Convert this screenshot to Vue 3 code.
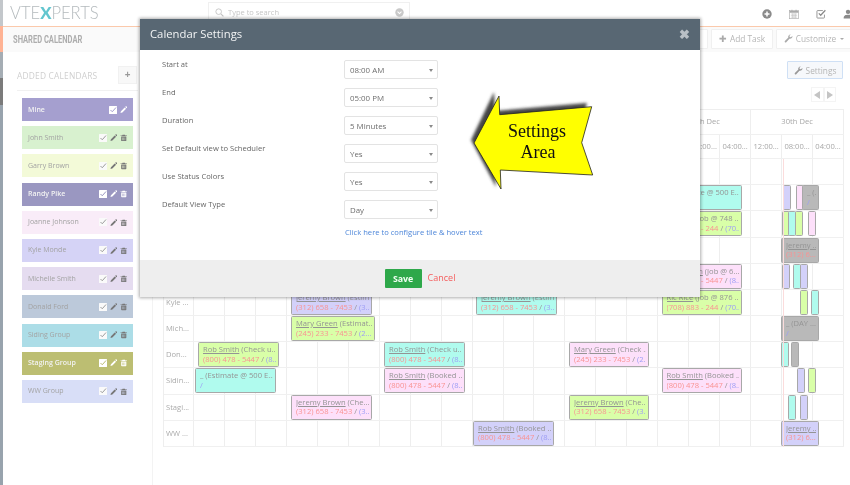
<script setup>
const calendars = [
  { name: 'Mine', bg: '#a59fcf', light: true, noTrash: true },
  { name: 'John Smith', bg: '#d8f1cf' },
  { name: 'Garry Brown', bg: '#f3fad8' },
  { name: 'Randy Pike', bg: '#9a97c1', light: true },
  { name: 'Joanne Johnson', bg: '#f9ecf8' },
  { name: 'Kyle Monde', bg: '#d5d3f6' },
  { name: 'Michelle Smith', bg: '#e5dcf0' },
  { name: 'Donald Ford', bg: '#bcc9da' },
  { name: 'Siding Group', bg: '#acdde7' },
  { name: 'Staging Group', bg: '#bcbe72', light: true },
  { name: 'WW Group', bg: '#d8def7' }
]
const days = ['24th Dec', '25th Dec', '26th Dec', '27th Dec', '28th Dec', '29th Dec', '30th Dec']
const times = ['12:00...', '08:00...', '04:00...']
const hours = days.flatMap(() => times)
const cells = Array.from({ length: 21 }, (_, i) => i)

const C = { cyan: '#b0fbee', green: '#d9ffa8', pink: '#fde0fa', lav: '#d3d1fa', gray: '#b9b9b9' }
const ev = (x1, x2, color, name, rest, phone, other) => ({ x1, x2, color, name, rest, phone, other })
const rows = [
  { name: 'Mine', events: [] },
  { name: 'John ...', events: [
    ev(661.5, 742, C.cyan, '', '_ (Estimate @ 500 E...', '', '/'),
    ev(783, 790, C.lav, 'R', '', '(', ''), ev(796, 802, C.pink, 'R', '', '(', ''), ev(802, 819, C.gray, '', '_ (...', '', '/')
  ] },
  { name: 'Garry ...', events: [
    ev(661.5, 742, C.green, 'Ric Rice', '(Job @ 748 ...', '(708) 883 - 244', '(70...'),
    ev(782, 787, C.green, '', '', '', ''), ev(788, 793, C.cyan, '', '', '', ''), ev(795, 800, C.green, '', '', '', ''), ev(808, 815, C.pink, 'R', '', '(', '')
  ] },
  { name: 'Randy ...', events: [ev(781, 819, C.gray, 'Jeremy ...', '', '(312) 6...', '')] },
  { name: 'Joann...', events: [
    ev(661.5, 742, C.pink, 'Rob Smith', '(Job @ 6...', '(800) 478 - 5447', '(8...'),
    ev(782, 790, C.lav, 'R', '', '(', ''), ev(793, 800, C.cyan, 'R', '', '(', ''), ev(800, 806, C.lav, 'R', '', '(', '')
  ] },
  { name: 'Kyle ...', events: [
    ev(291, 372, C.lav, 'Jeremy Brown', '(Estim...', '(312) 658 - 7453', '(3...'),
    ev(476, 557, C.cyan, 'Jeremy Brown', '(Estim...', '(312) 658 - 7453', '(3...'),
    ev(661.5, 742, C.green, 'Ric Rice', '(Job @ 876 ...', '(708) 883 - 244', '(70...'),
    ev(800, 805, C.green, '', '', '', ''), ev(811, 819, C.cyan, 'R', '', '(', '')
  ] },
  { name: 'Mich...', events: [
    ev(291, 375, C.green, 'Mary Green', '(Estimat...', '(245) 233 - 7453', '(2...'),
    ev(781, 819, C.gray, '', '_ (DAY ...', '', '/')
  ] },
  { name: 'Don...', events: [
    ev(198, 279, C.green, 'Rob Smith', '(Check u...', '(800) 478 - 5447', '(8...'),
    ev(384, 465, C.cyan, 'Rob Smith', '(Check u...', '(800) 478 - 5447', '(8...'),
    ev(569, 649, C.pink, 'Mary Green', '(Check ...', '(245) 233 - 7453', '(2...'),
    ev(781, 788, C.cyan, 'R', '', '(', ''), ev(791, 799, C.gray, 'M', '', '(', '')
  ] },
  { name: 'Sidin...', events: [
    ev(195, 276, C.cyan, '', '_ (Estimate @ 500 E...', '', '/'),
    ev(384, 465, C.pink, 'Rob Smith', '(Booked ...', '(800) 478 - 5447', '(8...'),
    ev(661.5, 742, C.pink, 'Rob Smith', '(Booked ...', '(800) 478 - 5447', '(8...'),
    ev(797, 804, C.lav, 'B', '', '(', ''), ev(808, 816, C.green, 'B', '', '(', '')
  ] },
  { name: 'Stagi...', events: [
    ev(291, 372, C.pink, 'Jeremy Brown', '(Che...', '(312) 658 - 7453', '(3...'),
    ev(569, 649, C.green, 'Jeremy Brown', '(Che...', '(312) 658 - 7453', '(3...'),
    ev(788, 796, C.cyan, 'J', '', '(', ''), ev(800, 808, C.lav, 'B', '', '(', '')
  ] },
  { name: 'WW ...', events: [
    ev(473, 554, C.lav, 'Rob Smith', '(Booked ...', '(800) 478 - 5447', '(8...'),
    ev(781, 819, C.lav, 'Jeremy ...', '', '(312) 6...', '')
  ] }
]
const evStyle = (e) => ({ left: e.x1 - 164 + 'px', width: e.x2 - e.x1 + 'px', background: e.color })

const settings = [
  { label: 'Start at', value: '08:00 AM' },
  { label: 'End', value: '05:00 PM' },
  { label: 'Duration', value: '5 Minutes' },
  { label: 'Set Default view to Scheduler', value: 'Yes' },
  { label: 'Use Status Colors', value: 'Yes' },
  { label: 'Default View Type', value: 'Day' }
]
const pencil = 'M1 15l1-4 8-8 3 3-8 8zM11 2l1.300-1.300a1 1 0 0 1 1.400 0l1.600 1.600a1 1 0 0 1 0 1.400L14 5z'
const trash = 'M5.500 1.500h5l1 1.500H15v1.500H1V3h3.500zM2.500 5.500h11V14a1.500 1.500 0 0 1-1.500 1.500H4A1.500 1.500 0 0 1 2.500 14zM5 7.500V13.500h1V7.500zM7.500 7.500V13.500h1V7.500zM10 7.500V13.500h1V7.500z'
const wrench = 'M15 4.500a4 4 0 0 1-5.300 3.800L4 14.500a1.600 1.600 0 0 1-2.400-2.200L7.700 6.400A4 4 0 0 1 12 1L9.700 3.300l.5 2.100 2.200.5L14.700 3.600q.3.400.3.900z'
</script>

<template>
  <div class="app">
    <div class="rail">
      <i class="rail-top"></i><i class="rail-accent"></i><i class="rail-mid"></i><i class="rail-thumb"></i><i class="rail-rest"></i>
    </div>
    <div class="page">
      <header class="topbar">
        <div class="logo">VTE<span class="logo-x">X</span>PERTS</div>
        <div class="search">
          <svg class="search-icon" viewBox="0 0 16 16"><circle cx="6.500" cy="6.500" r="5" fill="none" stroke="#c4c4c4" stroke-width="1.600"/><path d="M10.500 10.500L15 15" stroke="#c4c4c4" stroke-width="2"/></svg>
          <span class="search-text">Type to search</span>
          <svg class="search-more" viewBox="0 0 16 16"><circle cx="8" cy="8" r="7.500" fill="#c9c9c9"/><path d="M4.500 6.500L8 10l3.500-3.500" fill="none" stroke="#fff" stroke-width="1.800"/></svg>
        </div>
        <div class="top-icons">
          <svg viewBox="0 0 16 16"><circle cx="8" cy="8" r="7.500" fill="#8a8a8a"/><path d="M4 8h8M8 4v8" stroke="#fff" stroke-width="2.400"/></svg>
          <svg viewBox="0 0 16 16"><rect x="1" y="2.500" width="14" height="13" fill="none" stroke="#aaa" stroke-width="1"/><path d="M1 3h14v3H1zM4 1h1.500v3H4zM10.500 1H12v3h-1.500z" fill="#aaa"/><path d="M3 8h10M3 10.500h10M3 13h10M5.500 7v8M8 7v8M10.500 7v8" stroke="#bbb" stroke-width=".8"/></svg>
          <svg viewBox="0 0 16 16"><path d="M13.500 9v4.500a1 1 0 0 1-1 1h-10a1 1 0 0 1-1-1v-10a1 1 0 0 1 1-1H11" fill="none" stroke="#8a8a8a" stroke-width="1.400"/><path d="M4.500 7l3 3L15 2" fill="none" stroke="#8a8a8a" stroke-width="2"/></svg>
          <svg viewBox="0 0 16 16"><circle cx="8" cy="4.500" r="3.500" fill="#8a8a8a"/><path d="M1 15c0-5 3-6 7-6s7 1 7 6z" fill="#8a8a8a"/></svg>
        </div>
      </header>

      <div class="subbar">
        <h1 class="page-title">SHARED CALENDAR</h1>
        <div class="sub-actions">
          <button class="btn btn-add">Add Event</button>
          <button class="btn btn-add"><span class="plus">✚</span> Add Task</button>
          <button class="btn btn-custom">
            <svg viewBox="0 0 16 16"><path :d="wrench" fill="#aaa"/></svg>
            Customize <i class="caret"></i>
          </button>
        </div>
      </div>

      <div class="content">
        <aside class="sidebar">
          <div class="side-head">
            <span class="side-title">ADDED CALENDARS</span>
            <span class="side-plus">+</span>
          </div>
          <ul class="cal-list">
            <li v-for="c in calendars" :key="c.name" class="cal" :class="{ light: c.light }" :style="{ background: c.bg }">
              <span class="cal-name">{{ c.name }}</span>
              <svg class="ic ic-check" viewBox="0 0 16 16">
                <rect x="0" y="0" width="16" height="16" rx="1" :fill="c.light ? '#fff' : '#fafafa'"/>
                <path d="M3 8l3.500 3.500L14 3" fill="none" :stroke="c.light ? c.bg : '#9d9d9d'" stroke-width="2"/>
              </svg>
              <svg class="ic" viewBox="0 0 16 16"><path :d="pencil" :fill="c.light ? '#fff' : '#777'"/></svg>
              <svg v-if="!c.noTrash" class="ic" viewBox="0 0 16 16"><path :d="trash" fill-rule="evenodd" :fill="c.light ? '#fff' : '#777'"/></svg>
            </li>
          </ul>
        </aside>

        <main class="main">
          <div class="main-tools">
            <button class="btn btn-settings">
              <svg viewBox="0 0 16 16"><path :d="wrench" fill="#999"/></svg>
              Settings
            </button>
          </div>
          <div class="pager">
            <span class="pager-btn"><i class="tri tri-l"></i></span><span class="pager-btn"><i class="tri tri-r"></i></span>
          </div>
          <div class="sched">
            <div class="sched-row head-days">
              <span class="name-cell"></span>
              <span v-for="d in days" :key="d" class="day-cell">{{ d }}</span>
            </div>
            <div class="sched-row head-times">
              <span class="name-cell"></span>
              <span v-for="(h, i) in hours" :key="i" class="cell time-cell">{{ h }}</span>
            </div>
            <div v-for="r in rows" :key="r.name" class="sched-row body-row">
              <span class="name-cell row-name">{{ r.name }}</span>
              <span v-for="c in cells" :key="c" class="cell"></span>
              <div v-for="(e, i) in r.events" :key="i" class="event" :style="evStyle(e)">
                <div class="ev-line"><u v-if="e.name">{{ e.name }}</u> {{ e.rest }}</div>
                <div class="ev-line"><span class="ev-phone">{{ e.phone }}</span> <span v-if="e.other && e.phone">/ </span><span v-if="e.other" class="ev-other">{{ e.other }}</span></div>
              </div>
            </div>
            <i class="now-line"></i>
          </div>
        </main>
      </div>
    </div>

    <section class="modal">
      <div class="modal-head">
        <h2>Calendar Settings</h2>
        <span class="close">✖</span>
      </div>
      <div class="modal-body">
        <div v-for="s in settings" :key="s.label" class="form-row">
          <label>{{ s.label }}</label>
          <div class="select"><span>{{ s.value }}</span><i class="select-caret"></i></div>
        </div>
        <a class="config-link">Click here to configure tile &amp; hover text</a>
      </div>
      <div class="modal-foot">
        <button class="save">Save</button>
        <a class="cancel">Cancel</a>
      </div>
      <svg class="arrow" viewBox="0 0 140 110">
        <defs><filter id="sh" x="-20%" y="-20%" width="140%" height="140%"><feGaussianBlur stdDeviation="1.800"/></filter></defs>
        <polygon points="9,52 32,4 33,23 125,15 115,52 126,85 33,79 34,99" fill="#444" filter="url(#sh)" transform="translate(-2,-2)"/>
        <polygon points="10,53 35,6 35.700,24.700 127.700,16.700 117.700,52.700 128.700,85 36.300,80 37,99" fill="#ffff00" stroke="#222" stroke-width=".8"/>
        <text x="73" y="47" text-anchor="middle" class="arrow-text">Settings</text>
        <text x="74" y="68" text-anchor="middle" class="arrow-text">Area</text>
      </svg>
    </section>
  </div>
</template>

<style scoped>
.app {
  position: relative;
  width: 850px;
  height: 485px;
  overflow: hidden;
  display: flex;
  background: #fff;
  font-family: "Open Sans", sans-serif;
  filter: blur(0.5px);
}
.rail { width: 3px; flex: none; display: flex; flex-direction: column; }
.rail i { display: block; }
.rail-top { height: 26px; background: #c3c7cb; }
.rail-accent { height: 26px; background: #ffb394; }
.rail-mid { height: 26px; background: #a5adb4; }
.rail-thumb { height: 27px; background: #7b7b7b; }
.rail-rest { flex: 1; background: #98a3ad; }
.page { flex: 1; min-width: 0; display: flex; flex-direction: column; }

.topbar {
  height: 26px;
  flex: none;
  display: flex;
  align-items: center;
  border-bottom: 1px solid #fbc9ab;
}
.logo {
  width: 205px;
  padding-left: 7px;
  box-sizing: border-box;
  font: 300 16.600px/16px Lato, sans-serif;
  color: #b4babd;
  margin-top: -1px;
}
.logo-x { color: #63c6cf; font-weight: 900; }
.search {
  width: 202px;
  height: 20px;
  margin-top: -2px;
  box-sizing: border-box;
  border: 1px solid #f0f0f0;
  display: flex;
  align-items: center;
  padding: 0 5px 0 6px;
  gap: 4px;
}
.search-icon { width: 9px; height: 9px; }
.search-text { font-size: 7.500px; color: #c6c6c6; flex: 1; }
.search-more { width: 9px; height: 9px; }
.top-icons { margin-left: auto; margin-right: -3px; margin-top: 2px; display: flex; gap: 17px; }
.top-icons svg { width: 10px; height: 10px; }

.subbar {
  height: 25px;
  flex: none;
  background: #fafafa;
  display: flex;
  align-items: center;
  justify-content: space-between;
  padding-left: 10px;
}
.page-title {
  margin: 0;
  font: 700 10.200px "Roboto", sans-serif;
  color: #aeaeae;
  white-space: nowrap;
  transform-origin: left center;
  transform: scaleX(.74);
}
.sub-actions { display: flex; gap: 3px; margin-top: -2px; }
.btn {
  font-family: inherit;
  background: #fff;
  border: 1px solid #f0f0f0;
  color: #b5b5b5;
  font-size: 8.300px;
  display: flex;
  align-items: center;
  justify-content: center;
  gap: 3px;
  padding: 0;
  height: 20px;
  box-sizing: border-box;
  border-radius: 1px;
}
.btn svg { width: 9px; height: 9px; }
.btn-add { width: 62px; }
.plus { color: #aaa; font-size: 9px; }
.btn-custom { width: 76px; margin-right: -2px; }
.caret { width: 0; height: 0; border: 2px solid transparent; border-top: 2.500px solid #aaa; margin: 2px 0 0 1px; }

.content { flex: 1; min-height: 0; display: flex; }
.sidebar {
  width: 150px;
  flex: none;
  box-sizing: border-box;
  border-right: 1px solid #f3f3f3;
  padding: 14px 14px 0 14px;
}
.side-head {
  display: flex;
  justify-content: space-between;
  align-items: center;
  padding-bottom: 6px;
  box-sizing: content-box;
  border-bottom: 1px solid #f1f1f1;
  width: 121px;
  height: 18px;
  margin-bottom: 7px;
}
.side-title { font-size: 8.400px; color: #cfcfcf; letter-spacing: .2px; }
.side-plus {
  width: 19px; height: 18px; margin-right: 1px;
  background: #f8f8f8; border: 1px solid #f1f1f1; box-sizing: border-box;
  color: #999; font-size: 10px; font-weight: 700; line-height: 15px; text-align: center;
}
.cal-list { list-style: none; margin: 0 0 0 5px; padding: 0; width: 111px; display: flex; flex-direction: column; gap: 5.200px; }
.cal {
  height: 23px;
  display: flex;
  align-items: center;
  gap: 2.500px;
  padding: 0 6px;
  box-sizing: border-box;
  font-size: 7px;
  color: #a3a3a3;
}
.cal.light { color: #f2f2f2; font-weight: 600; }
.cal-name { flex: 1; white-space: nowrap; margin-top: -1px; }
.ic { width: 7.500px; height: 7.500px; flex: none; }
.ic-check { width: 8px; height: 8px; }

.main { flex: 1; min-width: 0; padding: 9px 0 0 10px; }
.main-tools { display: flex; justify-content: flex-end; width: 680px; }
.btn-settings { width: 56px; height: 18px; background: #f6f8fb; border-color: #cfe0f5; }
.pager { display: flex; justify-content: flex-end; width: 673px; margin-top: 8px; height: 15px; }
.pager-btn {
  width: 12.500px; height: 15px; box-sizing: border-box;
  border: 1px solid #f4f4f4; display: flex; align-items: center; justify-content: center;
}
.tri { width: 0; height: 0; border: 4px solid transparent; }
.tri-l { border-right: 6px solid #c4c4c4; border-left: 0; }
.tri-r { border-left: 6px solid #c4c4c4; border-right: 0; }

.sched {
  position: relative;
  margin-top: 7px;
  width: 681px;
  border-top: 1px solid #eee;
  border-left: 1px solid #eee;
  box-sizing: border-box;
}
.sched-row { position: relative; display: flex; border-bottom: 1px solid #f0f0f0; box-sizing: border-box; }
.name-cell { width: 30px; flex: none; box-sizing: border-box; border-right: 1px solid #eee; }
.cell { flex: 1 1 0; min-width: 0; box-sizing: border-box; border-right: 1px solid #eee; }
.head-days { height: 24.500px; }
.day-cell {
  flex: 1 1 0; min-width: 0; box-sizing: border-box; border-right: 1px solid #eee;
  text-align: center; font-size: 7.600px; line-height: 23px; color: #a8a8a8;
}
.head-times { height: 24.500px; }
.time-cell { text-align: center; font-size: 7.600px; line-height: 23px; color: #a8a8a8; white-space: nowrap; overflow: hidden; }
.body-row { height: 26.180px; }
.row-name { font-size: 7.600px; line-height: 25px; color: #ababab; padding-left: 2px; white-space: nowrap; overflow: hidden; }
.event {
  position: absolute;
  top: 0;
  height: 25px;
  box-sizing: border-box;
  border: 1px solid #a8a8a8;
  border-radius: 1.500px;
  padding: 2px 2px 0 4px;
  overflow: hidden;
  font-size: 7.600px;
  line-height: 9.700px;
  color: #949494;
  white-space: nowrap;
}
.ev-line { overflow: hidden; white-space: nowrap; height: 9.700px; }
.ev-phone { color: #f99393; }
.ev-other { color: #9d9df5; }
.now-line { position: absolute; left: 619px; top: 49px; bottom: 0; width: 1px; background: #fbdcdc; }

.modal {
  position: absolute;
  left: 140px;
  top: 19px;
  width: 560px;
  height: 278px;
  display: flex;
  flex-direction: column;
  background: #fff;
  box-shadow: 0 0 3px 1px rgba(0, 0, 0, .32);
}
.modal-head {
  height: 31px;
  flex: none;
  background: #586773;
  display: flex;
  align-items: center;
  justify-content: space-between;
  padding: 0 10px 2px;
  box-sizing: border-box;
}
.modal-head h2 { margin: 0; font-size: 11.300px; font-weight: 400; color: #f2f4f5; }
.close { color: #b9c0c6; font-size: 13px; font-weight: 700; }
.modal-body { flex: 1; padding: 9px 0 0 22px; position: relative; }
.form-row { display: flex; height: 28px; }
.form-row label { width: 182px; font-size: 7.600px; font-weight: 500; color: #666; line-height: 10px; }
.select {
  width: 94px; height: 19px; margin-top: 1px; box-sizing: border-box;
  border: 1px solid #e3e3e3; border-radius: 2px;
  display: flex; align-items: center; justify-content: space-between;
  padding: 0 4px 0 5px;
  font-size: 7.900px; color: #6e6e6e;
}
.select-caret { width: 0; height: 0; border: 2px solid transparent; border-top: 3px solid #8a8a8a; margin-top: 3px; }
.config-link { display: block; margin: 0 0 0 183px; font-size: 7.600px; color: #4d86d9; white-space: nowrap; }
.modal-foot {
  height: 37px; flex: none;
  background: #eee;
  display: flex;
  align-items: center;
  justify-content: center;
  gap: 6px;
  box-sizing: border-box;
}
.save {
  width: 37px; height: 19px;
  border: 0; border-radius: 1px;
  background: #2ea84a; color: #f2fff4;
  font-family: inherit; font-size: 8.800px; font-weight: 700; padding: 0;
}
.cancel { font-size: 9px; color: #f55c5c; margin-top: -2px; }
.arrow { position: absolute; left: 324px; top: 71px; width: 140px; height: 110px; }
.arrow-text { font-family: "Liberation Serif", serif; font-size: 18px; fill: #111; }
</style>

<style>
html, body { margin: 0; background: #fff; }
</style>
